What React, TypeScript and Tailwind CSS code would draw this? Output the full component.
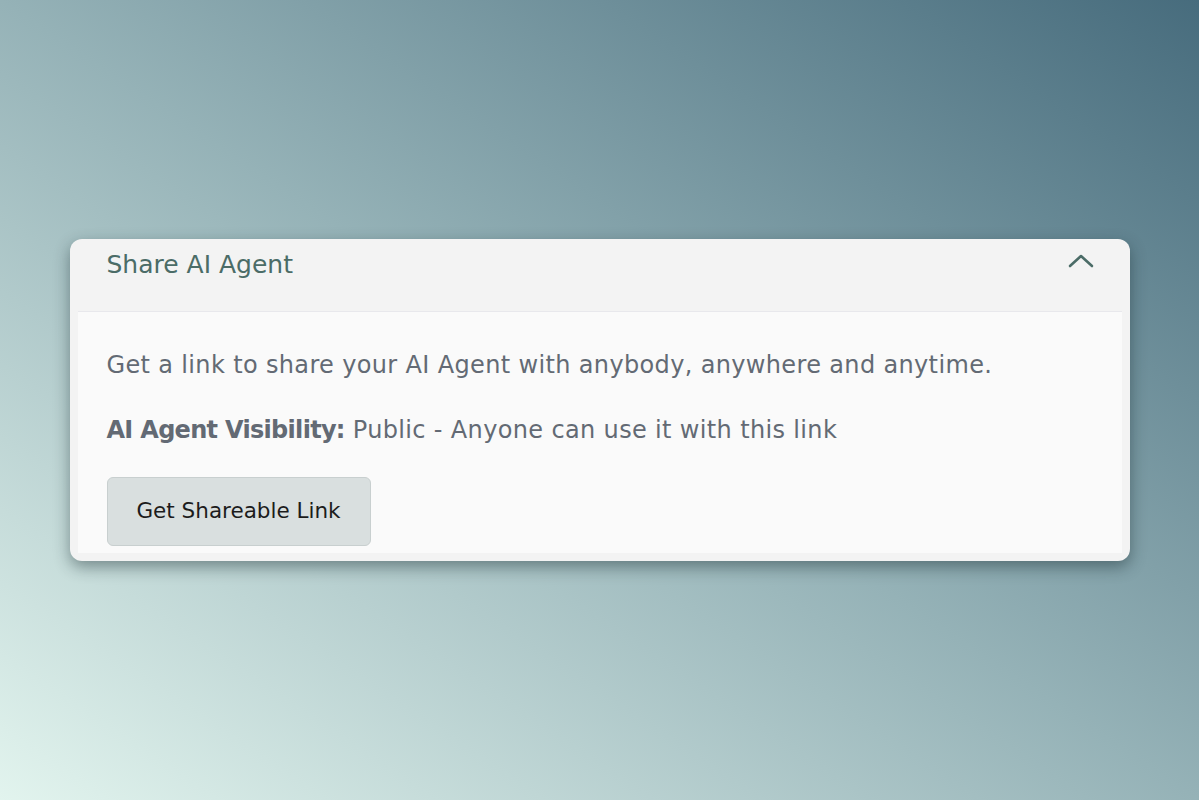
export default function App() {
  return (
    <div
      className="flex h-[800px] w-full items-center justify-center bg-[linear-gradient(to_top_right,#e2f4ee_0%,#95b2b7_50%,#476c7d_100%)]"
      style={{ fontFamily: "'DejaVu Sans', 'Liberation Sans', sans-serif" }}
    >
      <div className="w-[1060px] rounded-xl bg-[#f3f3f3] px-2 pb-2 shadow-[0_6px_16px_rgba(20,40,45,0.45)]">
        {/* HEADER */}
        <div className="flex h-[72px] items-start justify-between pl-[29px] pr-[28px] pt-[8px]">
          <h2 className="text-[25px] leading-[36px] text-[#4b6c67]">Share AI Agent</h2>
          <svg width="26" height="16" viewBox="0 0 26 16" className="mt-[6px]">
            <polyline
              points="2,13 13,3 24,13"
              fill="none"
              stroke="#4b6c67"
              strokeWidth="2.6"
              strokeLinecap="round"
              strokeLinejoin="round"
            />
          </svg>
        </div>

        {/* BODY */}
        <div className="border-t border-[#e8e8ec] bg-[#fafafa] pb-[7px] pl-[29px] pt-[37px] tracking-[0.35px] text-[#636a74]">
          <p className="text-[24px] leading-[32px]">
            Get a link to share your AI Agent with anybody, anywhere and anytime.
          </p>
          <p className="mt-[33px] text-[24px] leading-[32px]">
            <span className="font-bold tracking-[-0.7px]">AI Agent Visibility:</span> Public -
            Anyone can use it with this link
          </p>
          <button className="mt-[31px] h-[69px] w-[264px] rounded-md border border-[#c8cfcf] bg-[#d9dfdf] text-[21.5px] tracking-normal text-[#1c1c1c]">
            Get Shareable Link
          </button>
        </div>
      </div>
    </div>
  );
}
